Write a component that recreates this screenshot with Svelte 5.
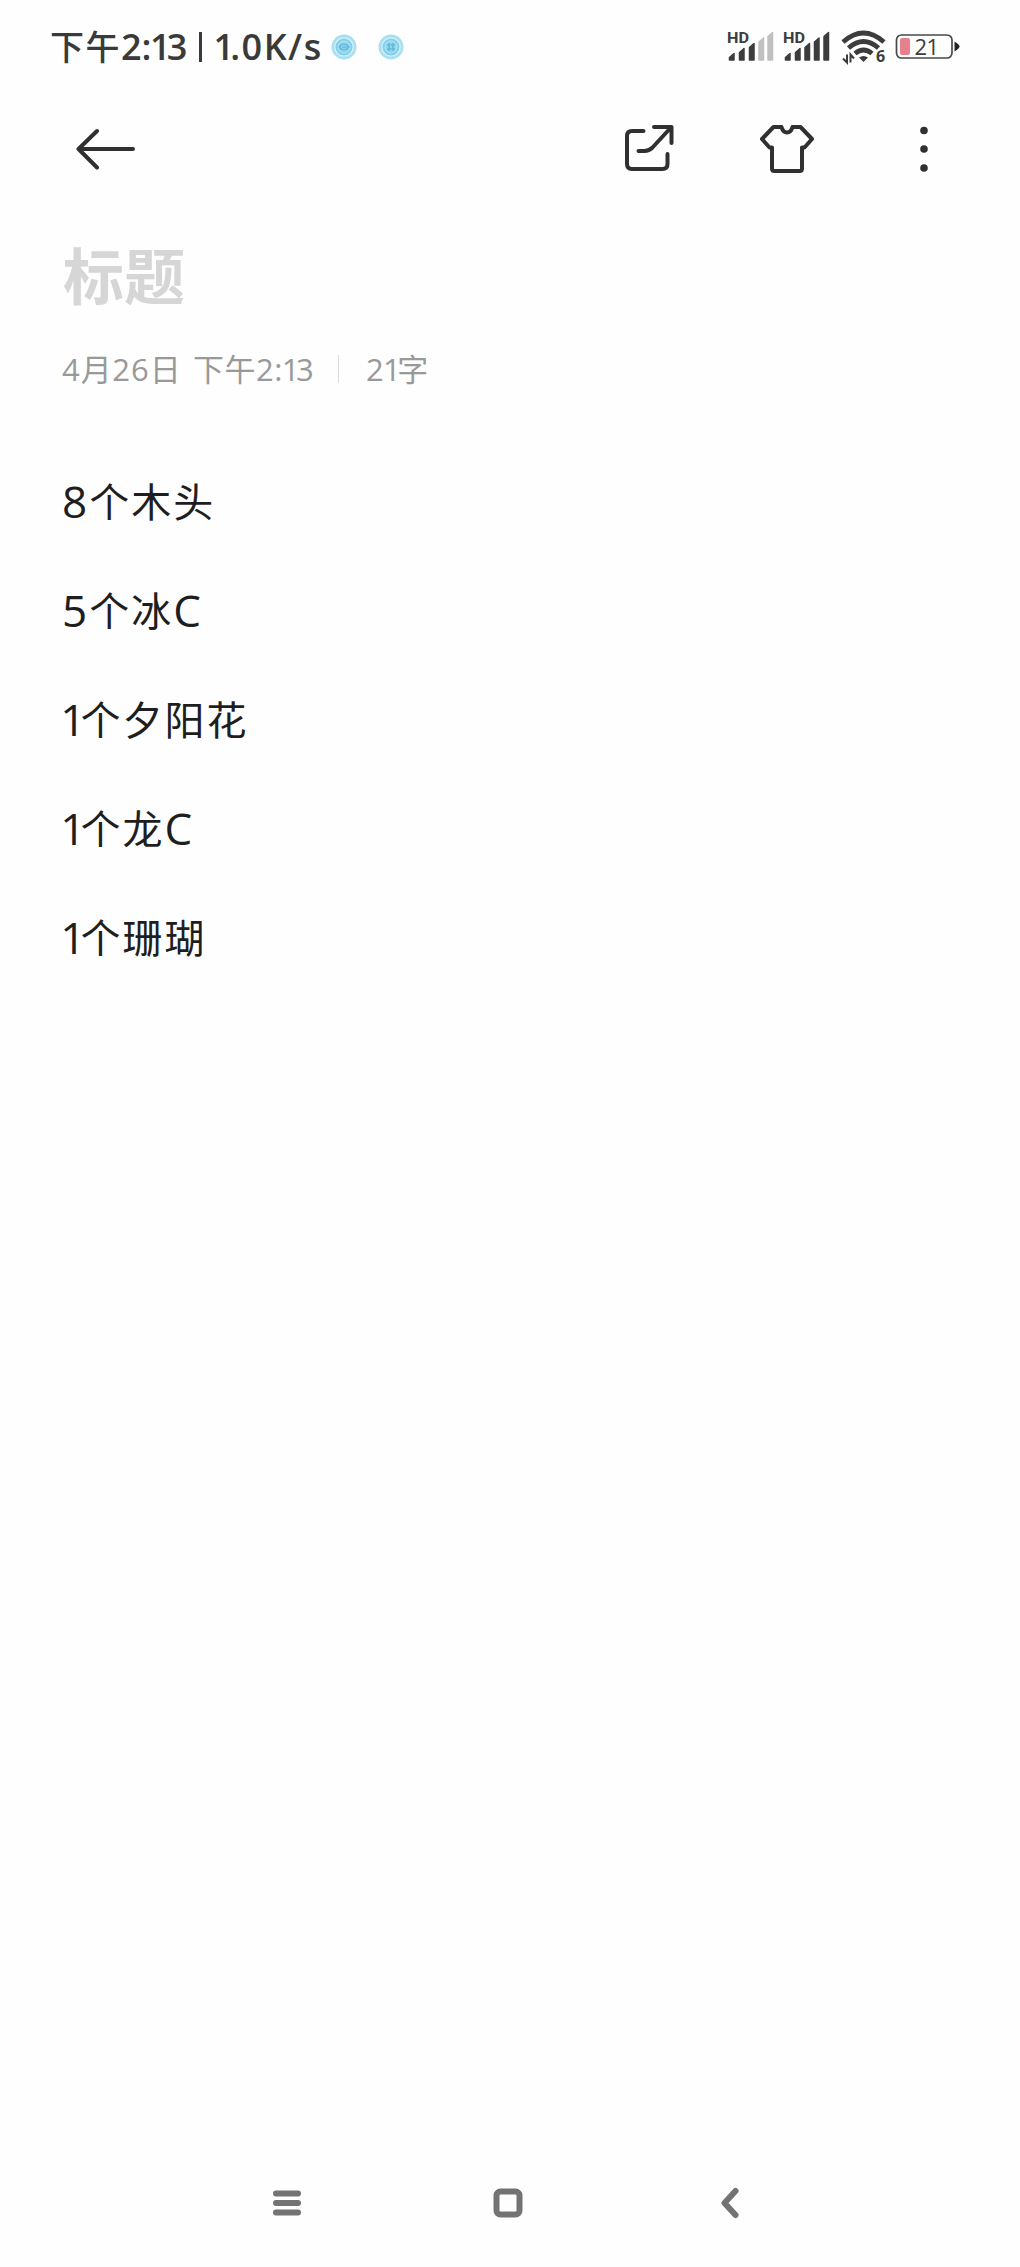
<script lang="ts">
	const statusTime = '下午2:13';
	const statusSpeed = '1.0K/s';
	const noteDate = '4月26日';
	const noteTime = '下午2:13';
	const noteCount = '21字';
	const lines = ['8个木头', '5个冰C', '1个夕阳花', '1个龙C', '1个珊瑚'];

	const signals = [
		{ active: 3, bars: [0, 10, 20, 29.5, 38.5] },
		{ active: 5, bars: [0, 10, 19.5, 29, 38.5] }
	];
	const barTops = [23.5, 18.5, 13.5, 8, 2.5];

	// Han characters, the narrow "1" and other latin text are spaced differently
	function runs(text: string) {
		const parts = text.match(/[\u4e00-\u9fff]+|1|[^\u4e00-\u9fff1]+/g) ?? [];
		return parts.map((part) => ({
			part,
			kind: part === '1' ? 'one' : /[\u4e00-\u9fff]/.test(part) ? 'han' : 'latin'
		}));
	}
</script>

{#snippet spaced(text: string)}
	{#each runs(text) as run}<span class={run.kind}>{run.part}</span>{/each}
{/snippet}

<div class="screen">
	<header class="status-bar">
		<div class="status-left">
			<span class="time">{@render spaced(statusTime)}</span>
			<span class="status-divider"></span>
			<span class="speed">{@render spaced(statusSpeed)}</span>
			{#each [0, 1] as dot}
				<svg class="app-dot" width="26" height="26" viewBox="0 0 26 26">
					<circle cx="13" cy="13" r="12.5" fill="#a8e0f2" />
					<circle cx="13" cy="13" r="9.2" fill="#82cfeb" stroke="#d4f1f8" stroke-width="1.3" />
					<circle cx="13" cy="13" r="6" fill="#8fd5ec" stroke="#b5e5f4" />
					<path
						d={dot ? 'M9 11h8M9 15h8M11 9v8M15 9v8' : 'M8 13q5-6 10 0q-5 6-10 0M11 13h5'}
						fill="none"
						stroke="#5cb2d8"
						stroke-width="1.2"
					/>
				</svg>
			{/each}
		</div>
		<div class="status-right">
			{#each signals as signal}
				<svg class="signal" width="48" height="34" viewBox="0 0 48 34">
					<text x="-2" y="12.5" class="hd" textLength="22" lengthAdjust="spacingAndGlyphs">HD</text>
					{#each signal.bars as x, i}
						<path
							d="M{x + 0.5} {barTops[i] + 4}L{x + 5} {barTops[i]}V30H{x + 0.5}Z"
							fill={i < signal.active ? '#3c3c3c' : '#c0c0c0'}
							stroke={i < signal.active ? '#3c3c3c' : '#c0c0c0'}
							stroke-width="1.5"
							stroke-linejoin="round"
						/>
					{/each}
				</svg>
			{/each}
			<svg class="wifi" width="46" height="34" viewBox="0 0 46 34">
				<g fill="none" stroke="#3c3c3c" stroke-width="4.8">
					<path d="M2 12Q22.5-6 43 12" />
					<path d="M7.5 18Q22.5 5 37.5 18" />
					<path d="M14 23.5Q22.5 16.5 31 23.5" />
				</g>
				<path d="M18 27.5q4.5-3 9 0l-4.5 4.5Z" fill="#3c3c3c" />
				<path d="M6 24.5v8L2 28.5M9.5 32.5v-8l3.5 4" fill="none" stroke="#3c3c3c" stroke-width="2" />
				<text x="35" y="32" class="wifi-gen">6</text>
			</svg>
			<svg class="battery" width="66" height="26" viewBox="0 0 66 26">
				<rect x="1.5" y="1" width="55.5" height="23" rx="5" fill="none" stroke="#484848" stroke-width="1.7" />
				<rect x="5" y="4" width="10" height="17" rx="2" fill="#e5808d" />
				<path d="M59.5 7.5q5 3 5 5t-5 5Z" fill="#222" />
				<text x="19.5" y="20.5" class="battery-level">21</text>
			</svg>
		</div>
	</header>

	<nav class="toolbar">
		<svg class="back" width="60" height="42" viewBox="0 0 60 42">
			<path d="M21 3L2.5 21L21 39.5M2.5 21H57" />
		</svg>
		<div class="actions">
			<svg width="52" height="52" viewBox="0 0 52 52">
				<path d="M20.5 8H9Q4 8 4 13v28Q4 46 9 46h30.5Q44.5 46 44.5 41V31" />
				<path d="M31 4H48.5V20M15.5 28h6q4.5 0 8-3.5L47.5 5" />
			</svg>
			<svg width="56" height="52" viewBox="0 0 56 52">
				<path
					d="M14.5 4h8c1 3.5 2.5 5.5 5.5 5.5s4.5-2 5.5-5.5h8L53 16L45.5 24.5H43V45.5Q43 48 40.5 48h-25Q13 48 13 45.5V24.5h-2.5L3 16Z"
				/>
			</svg>
			<svg class="more" width="8" height="46" viewBox="0 0 8 46">
				<circle cx="4" cy="4.5" r="3.8" />
				<circle cx="4" cy="23" r="3.8" />
				<circle cx="4" cy="42" r="3.8" />
			</svg>
		</div>
	</nav>

	<main class="note">
		<h1 class="title">标题</h1>
		<div class="meta">
			<span class="meta-date">{@render spaced(noteDate)}</span>
			<span class="meta-time">{@render spaced(noteTime)}</span>
			<span class="meta-divider"></span>
			<span>{@render spaced(noteCount)}</span>
		</div>
		<div class="content">
			{#each lines as line}
				<p>{@render spaced(line)}</p>
			{/each}
		</div>
	</main>

	<footer class="system-nav">
		<svg width="30" height="30" viewBox="0 0 30 30">
			<path d="M4 5.5H26M4 15H26M4 24.5H26" />
		</svg>
		<svg width="30" height="30" viewBox="0 0 30 30">
			<rect x="3.5" y="3.5" width="23" height="23" rx="4" />
		</svg>
		<svg width="20" height="32" viewBox="0 0 20 32">
			<path d="M15.5 4L4.5 16L15.5 28" />
		</svg>
	</footer>
</div>

<style>
	:global(body) {
		margin: 0;
		background: #fefefe;
	}

	.screen {
		display: flex;
		flex-direction: column;
		width: 1020px;
		height: 2267px;
		background: #fefefe;
		font-family: 'Open Sans', 'Noto Sans CJK SC', sans-serif;
		color: #1e1e1e;
	}

	.status-bar {
		display: flex;
		align-items: center;
		justify-content: space-between;
		box-sizing: border-box;
		height: 94px;
		padding: 0 59px 0 50px;
	}

	.status-left,
	.status-right,
	.actions,
	.meta {
		display: flex;
		align-items: center;
	}

	.status-left {
		font-size: 36px;
		font-weight: 550;
		line-height: 50px;
		color: #3a3a3a;
		white-space: nowrap;
	}

	.status-left .han {
		font-size: 34px;
		font-weight: 500;
		letter-spacing: 1.5px;
	}

	.time {
		width: 149px;
	}

	.speed {
		width: 105px;
	}

	.speed .latin {
		letter-spacing: 1.5px;
	}

	.status-divider {
		width: 3px;
		height: 30px;
		margin-right: 13px;
		background: #3a3a3a;
	}

	.app-dot {
		margin-left: 11px;
	}

	.app-dot + .app-dot {
		margin-left: 21px;
	}

	.one {
		margin-left: -0.04em;
		letter-spacing: -0.11em;
	}

	.signal {
		margin-right: 8px;
	}

	.status-right svg {
		overflow: visible;
	}

	.wifi {
		margin-right: 8px;
	}

	.hd {
		font: 700 15px Roboto, sans-serif;
		fill: #3c3c3c;
	}

	.wifi-gen {
		font: 700 16px 'Open Sans', sans-serif;
		fill: #3c3c3c;
	}

	.battery-level {
		font: 400 22px 'Open Sans', sans-serif;
		letter-spacing: -0.5px;
		fill: #3c3c3c;
	}

	.toolbar {
		display: flex;
		align-items: center;
		justify-content: space-between;
		box-sizing: border-box;
		height: 110px;
		padding: 0 92px 0 76px;
	}

	.toolbar svg {
		fill: none;
		stroke: #303030;
		stroke-width: 4;
		stroke-linecap: round;
		stroke-linejoin: round;
	}

	.toolbar .more {
		fill: #303030;
		stroke: none;
	}

	.actions {
		gap: 84px;
	}

	.actions .more {
		margin-left: 21px;
	}

	.note {
		flex: 1;
		padding: 0 62px;
	}

	.title {
		margin: 28px 0 0 1px;
		font-size: 61px;
		font-weight: 700;
		line-height: 90px;
		color: #d6d6d6;
	}

	.meta {
		height: 44px;
		margin-top: 25px;
		font-size: 31px;
		line-height: 44px;
		color: #999;
		white-space: nowrap;
	}

	.meta .han {
		letter-spacing: 0.5px;
	}

	.meta .latin {
		letter-spacing: 0.5px;
	}

	.meta-date {
		width: 131px;
	}

	.meta-date .latin {
		letter-spacing: 1px;
	}

	.meta-time {
		width: 145px;
	}

	.meta-divider {
		width: 1px;
		height: 28px;
		margin-right: 27px;
		background: #dcdcdc;
	}

	.content {
		margin-top: 56px;
		font-size: 44px;
	}

	.content p {
		height: 109px;
		margin: 0;
		line-height: 109px;
	}

	.content .han {
		font-size: 40px;
		letter-spacing: 2px;
		vertical-align: 1px;
	}

	.content .latin {
		letter-spacing: 2px;
	}

	.system-nav {
		display: flex;
		align-items: center;
		box-sizing: border-box;
		height: 128px;
		padding-left: 272px;
	}

	.system-nav svg {
		margin-right: 191px;
		fill: none;
		stroke: #737373;
		stroke-width: 6;
		stroke-linecap: round;
		stroke-linejoin: round;
	}

	.system-nav svg:nth-child(2) {
		margin-right: 197px;
	}
</style>
